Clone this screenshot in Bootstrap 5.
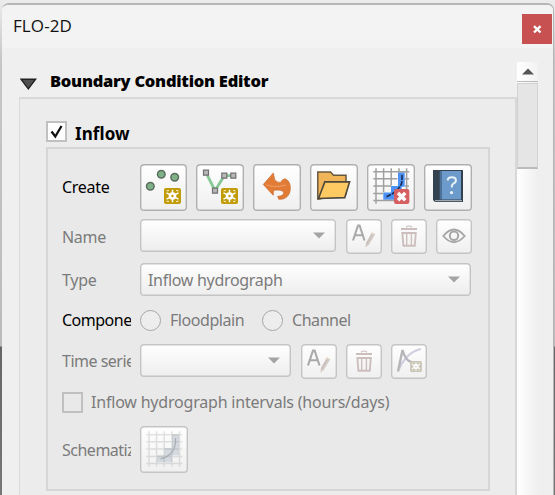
<!DOCTYPE html>
<html lang="en">
<head>
<meta charset="utf-8">
<title>FLO-2D</title>
<link href="https://cdn.jsdelivr.net/npm/bootstrap@5.3.0/dist/css/bootstrap.min.css" rel="stylesheet">
<style>
body{width:555px;height:495px;overflow:hidden;font:16px/20px "Noto Sans",sans-serif;letter-spacing:-.3px;color:#7b7b7b;padding:3px 1px 0 2px;background:linear-gradient(#ececec 0,#c6c6c6 60px,#bbb 346px,#666 347px,#777 100%)}
.panel-window{width:552px;height:500px;background:#efefef;border-top:2px solid #b5b5b5;border-right:1px solid #b5b5b5;border-radius:7px 7px 0 0;overflow:hidden}
.title-bar{height:43px;background:#f3f3f3;padding:0 1px 0 11px;color:#111}
.title-text{font:17px/20px "Open Sans",sans-serif;letter-spacing:.1px;margin-top:11px}
.close-btn{width:30px;height:30px;background:#c75050;border:0;margin:9px 0 0}
.view{width:515px;padding-top:14px}
.heading{height:35px;padding-left:18px;font-weight:700;color:#000}
.heading b{margin:9px 0 0 13px;font-size:16.5px;letter-spacing:-.26px}
.outer-group{margin-left:17px;width:498px;height:420px;border:2px solid #d8d8d8;border-left:1px solid #dadada;border-bottom:0;background:#ececec;padding:22px 0 0 26px}
.group-name{font-size:17px;line-height:17px;letter-spacing:.1px;margin:3px 0 0 8px;color:#000}
.tick{width:21px;height:21px;border:2px solid #c0c0c0;background:#fff}
.inner-group{width:444px;height:344px;border:2px solid #d6d6d6;background:#e9e9e9;margin-top:5px;padding:15px 0 0 14px}
.lbl{width:69px;margin-right:9px;overflow:hidden;white-space:nowrap;flex:none}
.tight{letter-spacing:-.5px}
.tool{flex:none;padding:0;border:0;border-radius:4px;background:linear-gradient(#fff,#efefef);box-shadow:inset 0 0 0 1.4px #b0b0b0}
.tool.off,.combo{box-shadow:inset 0 0 0 1.4px #c4c4c4}
.big{width:48px;height:47px}
.first{width:47px}
.sm{width:36px;height:35px}
.tool svg{display:block}
.combo{height:33px;border-radius:4px;background:linear-gradient(#fff,#ededed);padding:0 11px 0 8px}
.radio{width:21px;height:21px;border:1.5px solid #a6a6a6;border-radius:50%;background:#ededed;flex:none}
.radio-name{width:75px;margin:0 17px 0 9px;letter-spacing:-.45px}
.r1{height:47px}.r1 .lbl{margin-top:-2px}.r2{height:35px;margin-top:8px}.r3{height:33px;margin-top:9px}.r4{height:22px;margin-top:13px}.r5{height:35px;margin-top:13px}.r6{height:22px;margin-top:12px}.r7{height:47px;margin-top:13px}
.r5 .lbl{margin-top:7px}
.r6{letter-spacing:-.2px}
.gap-s{gap:9px}
.after-combo{margin-left:10px}
.scroll-track{width:21px;height:440px;margin-top:14px;background:linear-gradient(90deg,#fff,#efefef)}
.up{height:20px;background:linear-gradient(90deg,#fff,#f2f2f2);border-bottom:1px solid #bbb}
.thumb{height:86px;margin-top:1px;background:#e5e5e5;border:1px solid #d2d2d2;border-bottom:2px solid #bbb}
</style>
<script src="https://cdn.jsdelivr.net/npm/bootstrap@5.3.0/dist/js/bootstrap.bundle.min.js"></script>
</head>
<body>
<svg width="0" height="0" class="position-absolute">
<defs>
<symbol id="star" viewBox="0 0 17 16"><rect width="17" height="16" rx="2" fill="currentColor"/><path d="M8.5 1.8v12.4M2.5 4.8l12 6.4M14.5 4.8l-12 6.4" stroke="#fff" stroke-width="1.5"/><path d="M3 3.5V2.5h2M12 2.5h2v1M3 12.5v1h2M12 13.5h2v-1" fill="none" stroke="#f3e8bd"/><circle cx="8.5" cy="8" r="3.8" fill="#fff"/><circle cx="8.5" cy="8" r="1.2" fill="currentColor"/></symbol>
<symbol id="rename" viewBox="0 0 36 35"><path d="M7 21.5L12 6.5h1.6L18.5 21.5M9 16.3h8" fill="none" stroke="#a9a9a9" stroke-width="2.1"/><path d="M25.5 14l3.3 2-6 10-3.3 2.4.4-4.4z" fill="#d5cbc8"/><path d="M26.5 15l-6 10" stroke="#c2b9b6"/><path d="M25.5 14l3.3 2" stroke="#ddd3c5" stroke-width="2"/></symbol>
<symbol id="trash" viewBox="0 0 36 35"><g fill="none" stroke="#cdbebe"><path d="M10 10h16" stroke-width="2"/><path d="M15 8.3q3-2.6 6 0" stroke-width="1.2"/><path d="M11.4 14h13.4l-1 12.8H12.4z" stroke-width="1.9"/><path d="M15.7 15v11M20.4 15v11" stroke-width="1.4"/></g></symbol>
<symbol id="down" viewBox="0 0 12 7"><path d="M0 .5h12L6 6.5z" fill="#a4a4a4"/></symbol>
</defs>
</svg>
<div class="panel-window">
  <div class="title-bar d-flex justify-content-between align-items-start"><span class="title-text">FLO-2D</span>
    <button class="close-btn p-0"><svg class="d-block" width="30" height="30"><path d="M12 12.2l6.5 6.3M18.5 12.2L12 18.5" stroke="#fff" stroke-width="2.4"/></svg></button></div>
  <div class="d-flex">
    <div class="view">
      <div class="heading d-flex align-items-start"><svg class="mt-3" width="17" height="13"><path d="M1 1.2h14.6L8.3 10.8z" fill="#505050" stroke="#222" stroke-width="1.4"/></svg><b>Boundary Condition Editor</b></div>
      <div class="outer-group">
        <div class="d-flex align-items-center"><span class="tick"><svg class="d-block" width="17" height="17"><path d="M3.5 8.5l3.8 5L13.5 3" fill="none" stroke="#111" stroke-width="2.3"/></svg></span><b class="group-name">Inflow</b></div>
        <div class="inner-group">
          <div class="d-flex align-items-center r1"><span class="lbl text-black">Create</span>
            <div class="d-flex gap-s">
              <button class="tool big first"><svg width="47" height="47"><g fill="#7eb186" stroke="#5c6d60" stroke-width="1.5"><circle cx="10.3" cy="22.3" r="3.8"/><circle cx="21.3" cy="10.3" r="3.8"/><circle cx="34.7" cy="13.2" r="3.8"/></g><use href="#star" x="24" y="24" width="17" height="16" color="#c29c06"/></svg></button>
              <button class="tool big"><svg width="48" height="47"><path d="M10 8.7l9 18 9.3-15h9" fill="none" stroke="#88c796" stroke-width="2.8"/><g fill="#b8b8b8" stroke="#707070" stroke-width="1.2"><path d="M7.5 6.2h5v5h-5zM16.5 24.2h5v5h-5zM25.8 9.2h5v5h-5zM34.8 9.2h5v5h-5z"/></g><use href="#star" x="25" y="24" width="17" height="16" color="#c29c06"/></svg></button>
              <button class="tool big"><svg width="48" height="47"><path d="M10.3 20.5L20.3 9l1.3 6.2q2 4 6 3.2 1.5-3 4-3.6c4 1 5.9 5 5.7 9.7-.1 7-5 11.5-11.6 10.7l-1-2.9c3.6 0 6-1.4 6-3.6-.2-2.2-4-3.2-10.2-2.3l-.3 4.8z" fill="#e27b35" stroke="#c9692d" stroke-width=".7"/><path d="M13 20.8c6 2 10 2.200 20 .4" fill="none" stroke="#f1a36b"/></svg></button>
              <button class="tool big"><svg width="48" height="47"><path d="M7.8 35V8h12.7l3 3.3H36V30L9 35z" fill="#f0b559" stroke="#66583f" stroke-width="1.5"/><path d="M8.5 34.5l6.3-16.6H39.6L34.8 33.6z" fill="#ffca62" stroke="#4d473c" stroke-width="1.6"/></svg></button>
              <button class="tool big"><svg width="48" height="47"><path d="M31 8.3h6.7v14.4h-3v6H28v7H16.3v-7.2H24V22h7z" fill="#4c91f5"/><path d="M6.3 7.7h36M6.3 14.7h24M6.3 21.9h18M6.3 29.4h10M38 14.7h4M38 21.9h4M6.3 36.4h36M9 4.3v35.5M16.6 4.3v24M24.2 4.3v17M32 4.3v4M39.6 4.3v35.5" stroke="#a0a0a0" stroke-width="1.5"/><path d="M35 11v5q0 5-3 7.7-3 4-7 6.3l-6 3" fill="none" stroke="#18294a" stroke-width="1.5" stroke-dasharray="5 1"/><rect x="27" y="25" width="15.3" height="15" rx="2" fill="#d65f62"/><path d="M31 29l7.3 7.2M38.3 29L31 36.2" stroke="#fff" stroke-width="3.5"/></svg></button>
              <button class="tool big"><svg width="48" height="47"><path d="M9 6h30v32H11l-2-2z" fill="#34424f"/><path d="M17.5 7H37v28.5H17.5z" fill="#6c9acb"/><path d="M16.7 7v28.5" stroke="#4d7299" stroke-width="2"/><path d="M11 36.7h27" stroke="#b9c1c4"/><path d="M23.7 16.5q0-3.3 4.2-3.3 4 0 4 3.1 0 2.3-2.5 3.4-1.6.8-1.6 2.9v1" fill="none" stroke="#e6f1f8" stroke-width="2"/><circle cx="27.5" cy="28.6" r="1.6" fill="#e6f1f8"/></svg></button>
            </div></div>
          <div class="d-flex align-items-start r2"><span class="lbl mt-2">Name</span>
            <div class="combo d-flex align-items-center justify-content-end" style="width:196px"><svg width="12" height="7"><use href="#down"/></svg></div>
            <div class="d-flex gap-s after-combo"><button class="tool off sm"><svg width="36" height="35"><use href="#rename"/></svg></button><button class="tool off sm"><svg width="36" height="35"><use href="#trash"/></svg></button><button class="tool off sm"><svg width="36" height="35"><path d="M7.3 17q10.6-13 21.4 0-10.8 12.4-21.4 0z" fill="none" stroke="#a6a6a6" stroke-width="1.9"/><circle cx="18" cy="16.8" r="4.2" fill="none" stroke="#a6a6a6" stroke-width="2"/></svg></button></div></div>
          <div class="d-flex align-items-center r3"><span class="lbl">Type</span>
            <div class="combo d-flex align-items-center justify-content-between" style="width:331px"><span>Inflow hydrograph</span><svg width="12" height="7"><use href="#down"/></svg></div></div>
          <div class="d-flex align-items-center r4"><span class="lbl text-black tight">Compone</span><span class="radio"></span><span class="radio-name">Floodplain</span><span class="radio"></span><span class="radio-name">Channel</span></div>
          <div class="d-flex align-items-start r5"><span class="lbl tight">Time series</span>
            <div class="combo d-flex align-items-center justify-content-end" style="width:151px"><svg width="12" height="7"><use href="#down"/></svg></div>
            <div class="d-flex gap-s after-combo"><button class="tool off sm"><svg width="36" height="35"><use href="#rename"/></svg></button><button class="tool off sm"><svg width="36" height="35"><use href="#trash"/></svg></button><button class="tool off sm"><svg width="36" height="35"><path d="M8 25Q16 8 30 5" fill="none" stroke="#d0cfe2" stroke-width="2.3"/><path d="M7 27.500L11.500 6q3 11 9 12" fill="none" stroke="#b6b6b9" stroke-width="2.4"/><use href="#star" x="19" y="17" width="12" height="11" color="#c8c5b7"/></svg></button></div></div>
          <div class="d-flex align-items-center r6"><span class="tick bg-transparent"></span><span class="ms-2">Inflow hydrograph intervals (hours/days)</span></div>
          <div class="d-flex align-items-center r7"><span class="lbl tight">Schematize</span><button class="tool off big"><svg width="48" height="47"><path d="M32 8.300h7v21h-7v7H17v-7h7.500V22H32z" fill="#d3d9df"/><path d="M6.300 8.700h36M6.300 15.700h36M6.300 22.900h36M6.300 30.400h36M6.300 37.400h36M9 5.300v35.500M16.600 5.300v35.500M24.200 5.300v35.500M32 5.300v35.500M39.600 5.300v35.500" stroke="#999" stroke-opacity=".28" stroke-width="1.5"/><path d="M35.500 12v5q-2 13-15 16" fill="none" stroke="#a9adb1" stroke-width="1.200"/></svg></button></div>
        </div>
      </div>
    </div>
    <div class="scroll-track"><div class="up d-flex justify-content-center align-items-center"><svg width="12" height="7"><path d="M0 6.5h12L6 .5z" fill="#555"/></svg></div><div class="thumb"></div></div>
  </div>
</div>
</body>
</html>
